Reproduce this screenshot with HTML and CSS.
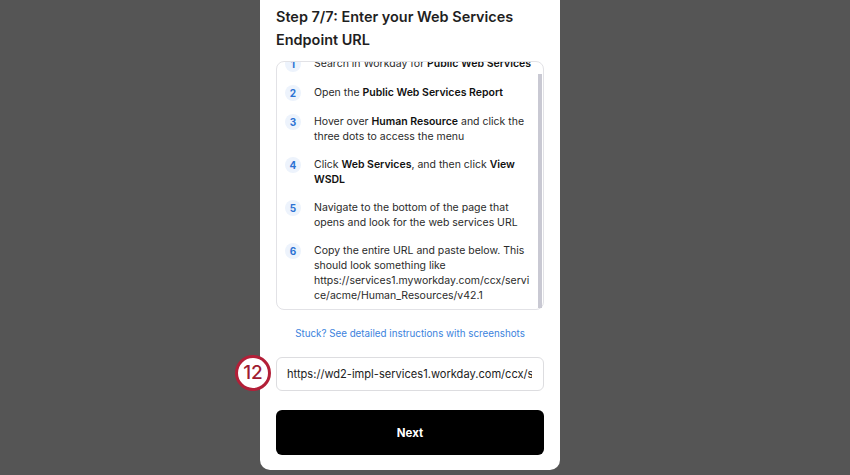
FILE: index.html
```html
<!DOCTYPE html>
<html lang="en">
<head>
    <meta charset="UTF-8">
    <meta name="viewport" content="width=device-width, initial-scale=1.0">
    <title>Workday setup</title>
    <link rel="stylesheet" href="styles.css">
</head>
<body>

    <div class="stage">
    <div class="card">
        <h1>Step 7/7: Enter your Web Services Endpoint URL</h1>

        <div class="steps-box">
            <div class="steps" id="steps">
                <ol>
                    <li><span class="num">1</span><p>Search in Workday for <b>Public Web Services</b></p></li>
                    <li><span class="num">2</span><p>Open the <b>Public Web Services Report</b></p></li>
                    <li><span class="num">3</span><p>Hover over <b>Human Resource</b> and click the three dots to access the menu</p></li>
                    <li><span class="num">4</span><p>Click <b>Web Services</b>, and then click <b>View WSDL</b></p></li>
                    <li><span class="num">5</span><p>Navigate to the bottom of the page that opens and look for the web services URL</p></li>
                    <li><span class="num">6</span><p>Copy the entire URL and paste below. This should look something like https://services1.myworkday.com/ccx/service/acme/Human_Resources/v42.1</p></li>
                </ol>
            </div>
            <div class="thumb"></div>
        </div>

        <a class="help" href="#">Stuck? See detailed instructions with screenshots</a>

        <div class="field">
            <span class="callout">12</span>
            <div class="url-box">
                <input type="text" value="https://wd2-impl-services1.workday.com/ccx/service/acme/Human_Resources/v42.1">
            </div>
        </div>

        <button type="button">Next</button>
    </div>
    </div>

    <script>
    // list is shown scrolled down to the end
    document.getElementById('steps').scrollTop = 9999;
    </script>
</body>
</html>
```

FILE: styles.css
```css
body {
    margin: 0;
    background-color: #555555;
    font-family: 'Inter', 'Liberation Sans', sans-serif;
    color: #1f1f1f;
}

.stage {
    height: 475px;
    padding-left: 260px;
}

.card {
    width: 300px;
    box-sizing: border-box;
    background-color: #ffffff;
    border-radius: 0 0 10px 10px;
    padding: 5px 16px 15px;
    position: relative;
}

h1 {
    margin: 0 0 10px;
    font-size: 14.45px;
    line-height: 23px;
    font-weight: 600;
}

.steps-box {
    position: relative;
    border: 1px solid #e2e2e6;
    border-radius: 8px;
}

.steps {
    height: 247px;
    overflow: hidden;
    border-radius: 8px;
}

.thumb {
    position: absolute;
    right: 1px;
    top: 12px;
    bottom: 1px;
    width: 4px;
    background-color: #c9c9d3;
}

.steps ol {
    list-style: none;
    margin: 0;
    padding: 10px 9px 6px 8px;
    display: flex;
    flex-direction: column;
    gap: 13px;
}

.steps li {
    display: flex;
    gap: 13px;
    font-size: 10.5px;
    line-height: 15px;
    color: #2a2a2a;
}

.steps p {
    margin: 0;
    overflow-wrap: anywhere;
}

.steps b {
    font-weight: 600;
    color: #111;
}

.num {
    flex: none;
    width: 16px;
    height: 16px;
    border-radius: 50%;
    background-color: #edf3fc;
    color: #2c72d3;
    font-size: 10px;
    font-weight: 700;
    line-height: 16px;
    text-align: center;
}

.help {
    display: block;
    text-align: center;
    margin: 17px 0 16px;
    font-size: 9.8px;
    line-height: 14px;
    color: #3b82dd;
    text-decoration: none;
}

.url-box {
    height: 34px;
    box-sizing: border-box;
    padding: 0 11px 0 10px;
    border: 1px solid #dddde0;
    border-radius: 6px;
}

.url-box input {
    display: block;
    width: 100%;
    height: 32px;
    padding: 0;
    border: none;
    font-family: inherit;
    font-size: 11.1px;
    color: #222;
    outline: none;
}

.callout {
    position: absolute;
    left: -25px;
    top: 355px;
    width: 30px;
    height: 30px;
    border: 3px solid #b31f38;
    border-radius: 50%;
    background-color: #ffffff;
    color: #9e1b31;
    font-size: 19px;
    font-weight: 500;
    line-height: 30px;
    text-align: center;
}

button {
    display: block;
    width: 100%;
    height: 45px;
    margin-top: 19px;
    border: none;
    border-radius: 6px;
    background-color: #000000;
    color: #ffffff;
    font-family: inherit;
    font-size: 11.5px;
    font-weight: 700;
    cursor: pointer;
}
```
